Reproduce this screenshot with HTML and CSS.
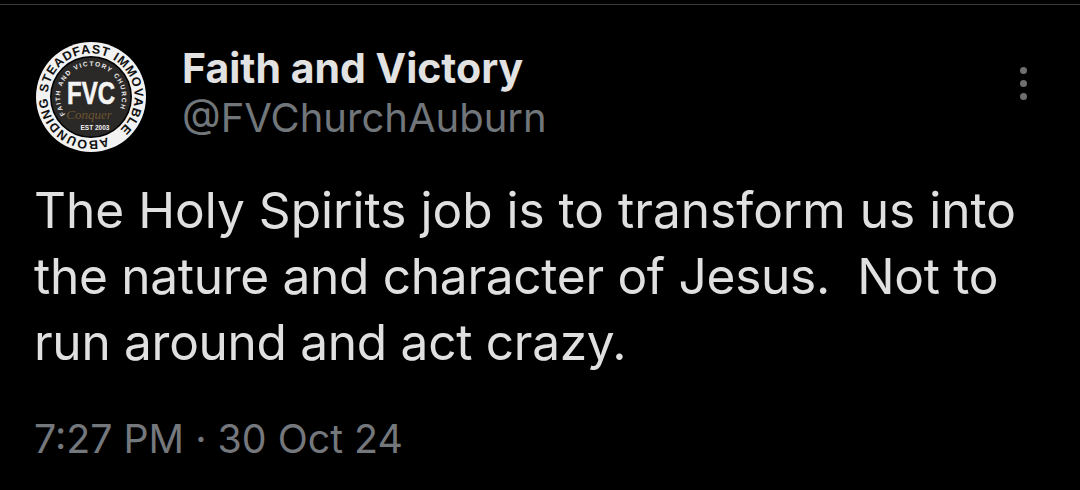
FILE: index.html
```html
<!DOCTYPE html>
<html lang="en">
<head>
    <meta charset="UTF-8">
    <title>Faith and Victory</title>
    <link rel="stylesheet" href="styles.css">
</head>
<body>
    <div class="tweet">
        <div class="tweet-head">
            <svg class="avatar" viewBox="0 0 112 112" width="112" height="112">
                <defs>
                    <path id="outerRing" d="M12.5 56 a43.5 43.5 0 1 1 87 0 a43.5 43.5 0 1 1 -87 0"/>
                    <path id="innerRing" d="M25 56 a31 31 0 1 1 62 0 a31 31 0 1 1 -62 0"/>
                </defs>
                <circle cx="56" cy="56" r="55" fill="#f2f2f2"/>
                <circle cx="56" cy="56" r="41" fill="#000"/>
                <circle cx="56" cy="56" r="39.5" fill="#2b2927"/>
                <g transform="rotate(-112 56 56)">
                    <text class="ring-outer">
                        <textPath href="#outerRing" textLength="258">ABOUNDING STEADFAST IMMOVABLE</textPath>
                    </text>
                </g>
                <g transform="rotate(-34 56 56)">
                    <text class="ring-inner">
                        <textPath href="#innerRing" textLength="127">FAITH AND VICTORY CHURCH</textPath>
                    </text>
                </g>
                <text class="ring-inner" x="60" y="89" text-anchor="middle">EST 2003</text>
                <text class="fvc" x="32" y="63" textLength="48" lengthAdjust="spacingAndGlyphs">FVC</text>
                <text class="script" x="54" y="78" text-anchor="middle">Conquer</text>
            </svg>
            <div class="names">
                <div class="name">Faith and Victory</div>
                <div class="handle">@FVChurchAuburn</div>
            </div>
            <div class="more">
                <span class="dot"></span>
                <span class="dot"></span>
                <span class="dot"></span>
            </div>
        </div>
        <p class="text">The Holy Spirits job is to transform us into<br><span class="tight">the nature and character of Jesus.&nbsp; Not to</span><br><span class="tight">run around and act crazy.</span></p>
        <div class="time">7:27 PM · 30 Oct 24</div>
    </div>
</body>
</html>
```

FILE: styles.css
```css
body {
    background-color: #000;
    margin: 0;
    font-family: Inter, "Liberation Sans", sans-serif;
    overflow: hidden;
}

.tweet {
    border-top: 1px solid #3a3a3a;
    margin-top: 4px;
    padding: 36px 35px 0 34px;
    height: 449px;
}

.tweet-head {
    display: flex;
    align-items: flex-start;
}

.avatar {
    flex: none;
    margin-left: 1px;
}

.ring-outer {
    font-family: "Liberation Sans", sans-serif;
    font-size: 12.5px;
    font-weight: 700;
    fill: #111;
}

.ring-inner {
    font-family: "Liberation Sans", sans-serif;
    font-size: 6.5px;
    font-weight: 700;
    fill: #eee;
}

.fvc {
    font-family: "Liberation Sans", sans-serif;
    font-size: 31px;
    font-weight: 700;
    fill: #f4f4f4;
    stroke: #f4f4f4;
    stroke-width: 0.6px;
}

.script {
    font-family: "Liberation Serif", serif;
    font-style: italic;
    font-size: 13px;
    fill: #6b5430;
}

.names {
    margin-left: 35px;
    margin-top: 2px;
}

.name {
    color: #e2e2e2;
    font-size: 41px;
    font-weight: 700;
    line-height: 50px;
}

.handle {
    color: #71767b;
    font-size: 40px;
    line-height: 50px;
}

.more {
    margin-left: auto;
    margin-right: 18px;
    margin-top: 26px;
    display: flex;
    flex-direction: column;
    gap: 6px;
}

.dot {
    display: block;
    width: 7px;
    height: 7px;
    border-radius: 50%;
    background-color: #6f6f6f;
}

.text {
    margin: 24px 0 0 0;
    color: #e0e0e0;
    font-size: 49.6px;
    line-height: 66px;
    white-space: nowrap;
}

.tight {
    letter-spacing: -0.3px;
}

.time {
    margin-top: 39px;
    color: #74787d;
    font-size: 39.3px;
    line-height: 50px;
}
```
